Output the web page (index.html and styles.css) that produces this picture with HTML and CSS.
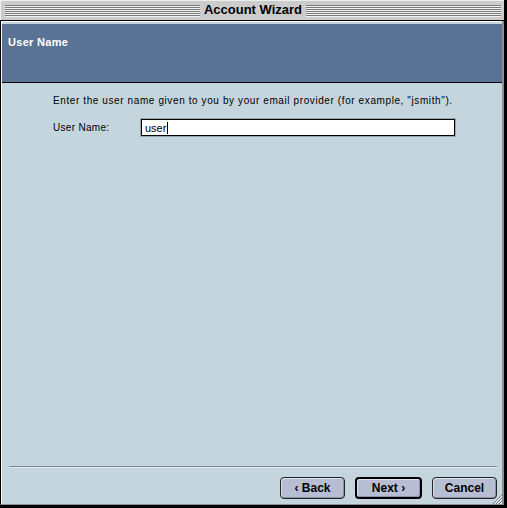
FILE: index.html
```html
<!DOCTYPE html>
<html>
<head>
<meta charset="utf-8">
<title>Account Wizard</title>
<link rel="stylesheet" href="styles.css">
</head>
<body>
<div class="window">
  <div class="titlebar">
    <div class="stripes"></div>
    <div class="title">Account Wizard</div>
    <div class="stripes"></div>
  </div>
  <div class="frame">
    <div class="header">User Name</div>
    <div class="main">
      <p class="intro">Enter the user name given to you by your email provider (for example, "jsmith").</p>
      <div class="row">
        <label class="label">User Name:</label>
        <div class="input"><span class="value">user</span><span class="caret"></span></div>
      </div>
    </div>
    <div class="footer">
      <div class="separator"></div>
      <div class="buttons">
        <button class="btn">‹ Back</button>
        <button class="btn btn-default">Next ›</button>
        <button class="btn">Cancel</button>
      </div>
    </div>
    <svg class="grow" width="9" height="9" viewBox="0 0 9 9">
      <path d="M0 9 L9 0 M3 9 L9 3 M6 9 L9 6" stroke="#6f7a88" stroke-width="1"/>
      <path d="M1 9 L9 1 M4 9 L9 4 M7 9 L9 7" stroke="#ffffff" stroke-width="1"/>
    </svg>
  </div>
</div>
</body>
</html>
```

FILE: styles.css
```css
html, body {
  margin: 0;
  padding: 0;
  background: #000;
}

.window {
  width: 504px;
  height: 505px;
  display: flex;
  flex-direction: column;
  background: #c5d5de;
  font-family: "Liberation Sans", Arial, sans-serif;
}

.titlebar {
  flex: none;
  display: flex;
  align-items: center;
  padding: 0 3px 0 5px;
  background: #cccccc;
  border-bottom: 1px solid #000;
  box-shadow: inset 1px 1px 0 #eeeeee;
  box-sizing: border-box;
  height: 21px;
}

.stripes {
  flex: 1;
  height: 12px;
  margin-top: 1px;
  background: repeating-linear-gradient(to bottom, #7a7a7a 0, #7a7a7a 1px, #f2f2f2 1px, #f2f2f2 2px);
}

.title {
  padding: 0 4px;
  font-weight: bold;
  font-size: 13px;
  color: #000;
  line-height: 16px;
}

.frame {
  flex: 1;
  position: relative;
  display: flex;
  flex-direction: column;
  border-left: 1px solid #000;
  border-right: 2px solid #8a8f99;
  border-bottom: 1px solid #8a8f99;
  padding: 3px 0 0 1px;
  background: #c5d5de;
  box-shadow: inset 1px 1px 0 #ffffff;
}

.header {
  flex: none;
  background: #5a7394;
  border-bottom: 1px solid #000;
  color: #fff;
  font-weight: bold;
  font-size: 11px;
  letter-spacing: 0.3px;
  padding: 12px 0 0 6px;
  box-sizing: border-box;
  height: 59px;
}

.main {
  flex: 1;
  padding: 11px 0 0 51px;
  font-size: 10px;
  letter-spacing: 0.6px;
  color: #000;
}

.intro {
  margin: 0;
  line-height: 14px;
}

.row {
  display: flex;
  align-items: center;
  margin-top: 11px;
}

.label {
  width: 88px;
  line-height: 14px;
  letter-spacing: 0.3px;
}

.input {
  box-sizing: border-box;
  width: 314px;
  height: 17px;
  border: 1px solid #000;
  background: #fff;
  box-shadow: 0 0 0 1px #9aa5b3;
  display: flex;
  align-items: center;
  padding-left: 3px;
  font-size: 11px;
  letter-spacing: 0;
}

.caret {
  width: 1px;
  height: 12px;
  background: #000;
  margin-left: 1px;
}

.footer {
  flex: none;
  padding: 0 5px 5px 7px;
}

.separator {
  height: 1px;
  background: #7d8796;
  border-bottom: 1px solid #e2eaee;
  margin-bottom: 9px;
}

.buttons {
  display: flex;
  justify-content: flex-end;
  gap: 10px;
}

.btn {
  height: 22px;
  width: 65px;
  margin: 0;
  padding: 0;
  border: 1px solid #222;
  border-radius: 4px;
  background: #b7bdd2;
  box-shadow: inset 1px 1px 0 #dfe3ee, inset -1px -1px 0 #8d93a8;
  font-family: "Liberation Sans", Arial, sans-serif;
  font-weight: bold;
  font-size: 12px;
  color: #000;
}

.btn-default {
  width: 67px;
  border: 2px solid #000;
}

.grow {
  position: absolute;
  right: 0;
  bottom: 0;
}
```
